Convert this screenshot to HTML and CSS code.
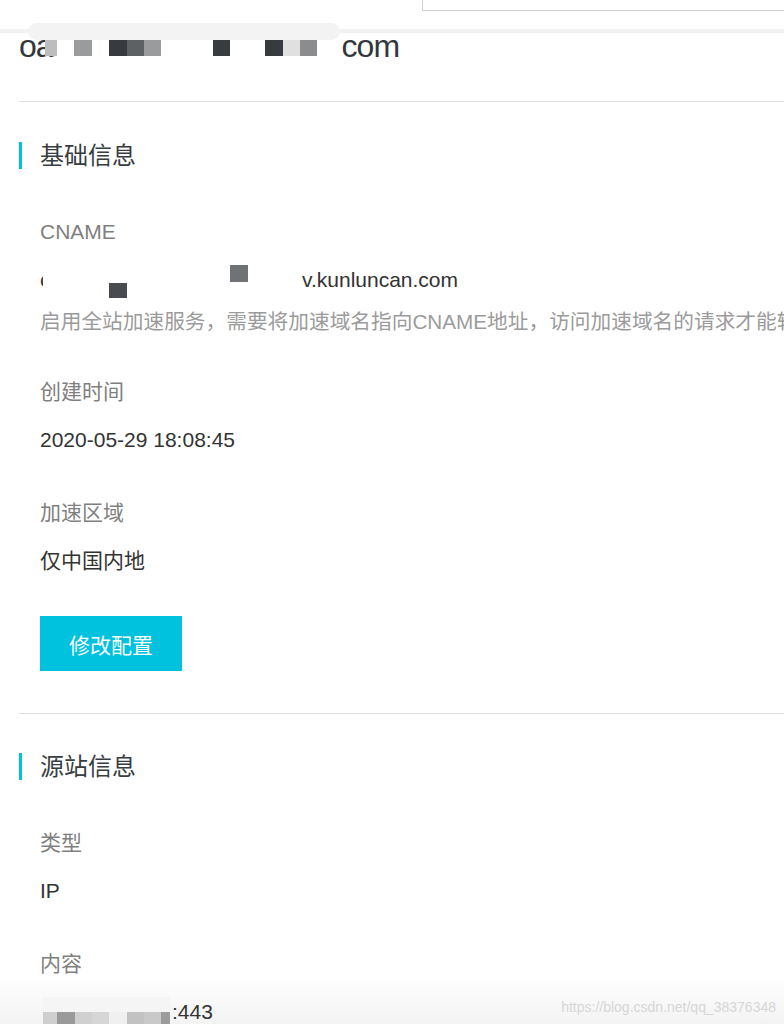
FILE: index.html
```html
<!DOCTYPE html>
<html lang="zh-CN">
<head>
<meta charset="utf-8">
<title>域名详情</title>
<link rel="stylesheet" href="styles.css">
</head>
<body>
<div class="topbar"><div class="search"></div></div>
<div class="band"></div>

<h1 class="title">
  <span class="mask"></span>
  <span class="px" style="left:26px;width:12px;background:#bdbdbd"></span>
  <span class="px" style="left:55px;width:18px;background:#999b9c"></span>
  <span class="px" style="left:90px;width:18px;background:#373b3f"></span>
  <span class="px" style="left:108px;width:17px;background:#5e6164"></span>
  <span class="px" style="left:125px;width:17px;background:#9a9b9c"></span>
  <span class="px" style="left:194px;width:17px;background:#383b3f"></span>
  <span class="px" style="left:246px;width:18px;background:#373b3f"></span>
  <span class="px" style="left:264px;width:17px;background:#e0e0e0"></span>
  <span class="px" style="left:281px;width:17px;background:#8b8c8e"></span>
  oa<span class="gap title-gap"></span>com
</h1>

<section class="section">
  <h2 class="section-head">基础信息</h2>
  <div class="fields">
    <div class="label first">CNAME</div>
    <div class="value redacted">
      <span class="clip">c</span><span class="gap cname-gap"></span>v.kunluncan.com
      <span class="blk" style="left:69px;top:17px;width:18px;height:15px;background:#484b50"></span>
      <span class="blk" style="left:190px;top:-1px;width:18px;height:17px;background:#6f7276"></span>
    </div>
    <div class="desc">启用全站加速服务，需要将加速域名指向CNAME地址，访问加速域名的请求才能转发到加速节点上。</div>
    <div class="label after-desc">创建时间</div>
    <div class="value">2020-05-29 18:08:45</div>
    <div class="label">加速区域</div>
    <div class="value">仅中国内地</div>
    <button class="btn">修改配置</button>
  </div>
</section>

<div class="divider"></div>

<section class="section">
  <h2 class="section-head second">源站信息</h2>
  <div class="fields">
    <div class="label first">类型</div>
    <div class="value">IP</div>
    <div class="label">内容</div>
    <div class="value redacted">
      <span class="gap ip-gap"></span>:443
      <span class="blk" style="left:3px;top:-1px;width:127px;height:15px;background:#f5f5f5"></span>
      <span class="blk" style="left:3px;top:14px;width:14px;height:12px;background:#cfcfcf"></span>
      <span class="blk" style="left:17px;top:14px;width:18px;height:12px;background:#9a9a9a"></span>
      <span class="blk" style="left:35px;top:14px;width:17px;height:12px;background:#d0d0d0"></span>
      <span class="blk" style="left:52px;top:14px;width:17px;height:12px;background:#d6d6d6"></span>
      <span class="blk" style="left:69px;top:14px;width:18px;height:12px;background:#f0f0f0"></span>
      <span class="blk" style="left:87px;top:14px;width:17px;height:12px;background:#c2c2c2"></span>
      <span class="blk" style="left:104px;top:14px;width:17px;height:12px;background:#c9c9c9"></span>
      <span class="blk" style="left:121px;top:14px;width:9px;height:12px;background:#9c9c9c"></span>
    </div>
  </div>
</section>

<div class="watermark">https://blog.csdn.net/qq_38376348</div>
</body>
</html>
```

FILE: styles.css
```css
html, body {
  margin: 0;
  padding: 0;
  overflow: hidden;
}

body {
  position: relative;
  width: 784px;
  height: 1024px;
  font-family: "Liberation Sans", "Noto Sans CJK SC", sans-serif;
  color: #333;
  background: linear-gradient(to bottom, #ffffff 0, #ffffff 975px, #f3f3f3 1024px);
}

.topbar {
  height: 29px;
}

.search {
  margin-left: 422px;
  height: 11px;
  box-sizing: border-box;
  border-left: 1px solid #d2d2d2;
  border-bottom: 1px solid #d2d2d2;
  background: #fff;
}

.band {
  height: 4px;
  background: #f2f2f2;
}

.title {
  position: relative;
  margin: 0 0 0 19px;
  padding: 0 0 44px 0;
  font-size: 32px;
  font-weight: normal;
  letter-spacing: -1px;
  line-height: 26px;
  height: 24px;
  color: #33373b;
  border-bottom: 1px solid #dedede;
  white-space: nowrap;
}

.mask {
  position: absolute;
  left: 9px;
  top: -10px;
  width: 312px;
  height: 17px;
  border-radius: 9px;
  background: #f3f3f3;
}

.px {
  position: absolute;
  top: 7px;
  height: 16px;
}

.gap {
  display: inline-block;
  height: 1px;
}

.title-gap {
  width: 289px;
}

.section-head {
  margin: 40px 0 0 19px;
  padding-left: 18px;
  border-left: 3px solid #00c1de;
  font-size: 24px;
  font-weight: normal;
  line-height: 27px;
  height: 27px;
  color: #373d41;
}

.section-head.second {
  margin-top: 39px;
}

.fields {
  padding-left: 40px;
  font-size: 21px;
  line-height: 28px;
}

.label {
  margin-top: 45px;
  color: #7f7f7f;
}

.label.first {
  margin-top: 49px;
}

.label.after-desc {
  margin-top: 42px;
}

.value {
  margin-top: 20px;
  color: #333;
  white-space: nowrap;
}

.redacted {
  position: relative;
}

.blk {
  position: absolute;
}

.clip {
  display: inline-block;
  width: 3px;
  overflow: hidden;
  vertical-align: top;
}

.cname-gap {
  width: 259px;
}

.ip-gap {
  width: 132px;
}

.desc {
  margin-top: 14px;
  font-size: 20.7px;
  color: #9b9b9b;
  white-space: nowrap;
}

.btn {
  display: block;
  margin-top: 41px;
  width: 142px;
  height: 55px;
  padding: 0;
  border: 0;
  background: #00c1de;
  color: #fff;
  font-family: "Liberation Sans", "Noto Sans CJK SC", sans-serif;
  font-size: 21px;
}

.divider {
  margin: 42px 0 0 19px;
  border-top: 1px solid #dedede;
}

.watermark {
  position: absolute;
  right: 8px;
  bottom: 9px;
  font-size: 14px;
  line-height: 16px;
  color: #d6d6d6;
  white-space: nowrap;
}
```
